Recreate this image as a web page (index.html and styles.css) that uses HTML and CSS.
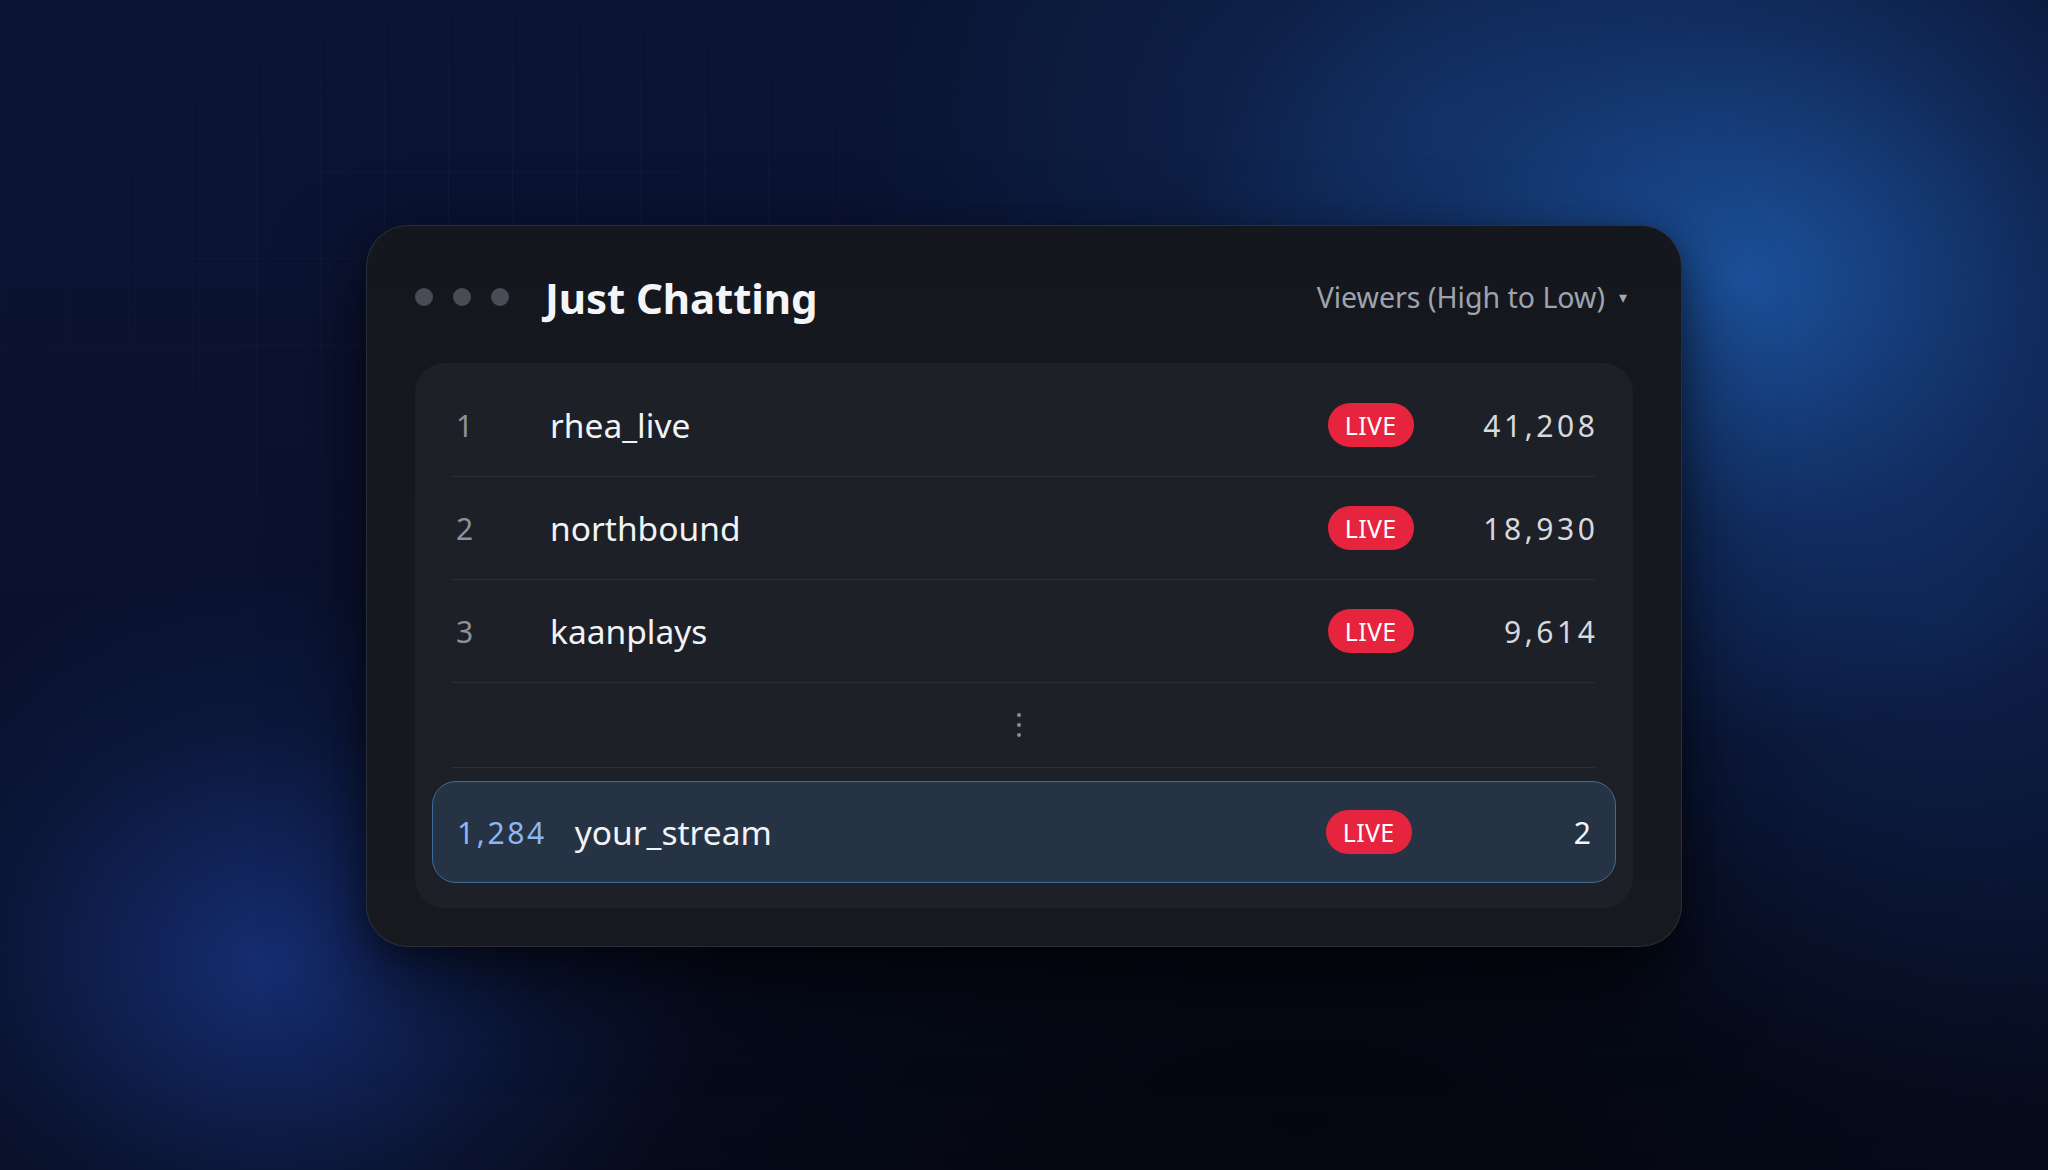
FILE: index.html
```html
<!DOCTYPE html>
<html lang="en">
<head>
<meta charset="utf-8">
<title>Just Chatting</title>
<link rel="stylesheet" href="styles.css">
</head>
<body>
<div class="stage">
  <div class="grid"></div>
  <section class="card">
    <header class="card-head">
      <div class="dots"><span class="dot"></span><span class="dot"></span><span class="dot"></span></div>
      <h1 class="title">Just Chatting</h1>
      <div class="sort">Viewers (High to Low) <span class="caret">&#9662;</span></div>
    </header>
    <div class="panel">
      <div class="row">
        <span class="rank">1</span>
        <span class="name">rhea_live</span>
        <span class="live">LIVE</span>
        <span class="count">41,208</span>
      </div>
      <div class="row">
        <span class="rank">2</span>
        <span class="name">northbound</span>
        <span class="live">LIVE</span>
        <span class="count">18,930</span>
      </div>
      <div class="row">
        <span class="rank">3</span>
        <span class="name">kaanplays</span>
        <span class="live">LIVE</span>
        <span class="count">9,614</span>
      </div>
      <div class="gap-row"><span class="vdots"><i></i><i></i><i></i></span></div>
      <div class="row row-you">
        <span class="rank rank-you">1,284</span>
        <span class="name">your_stream</span>
        <span class="live">LIVE</span>
        <span class="count count-you">2</span>
      </div>
    </div>
  </section>
</div>
</body>
</html>
```

FILE: styles.css
```css
* { box-sizing: border-box; }
html, body { margin: 0; padding: 0; }
body {
  width: 2048px;
  height: 1170px;
  overflow: hidden;
  font-family: "Noto Sans", "Open Sans", sans-serif;
  background: #080d20;
}
.stage {
  position: relative;
  width: 2048px;
  height: 1170px;
  display: flex;
  align-items: center;
  justify-content: center;
  background:
    radial-gradient(ellipse 560px 460px at 1740px 280px, rgba(30, 90, 170, 0.85), rgba(24, 70, 140, 0.4) 55%, rgba(0, 0, 0, 0) 100%),
    radial-gradient(ellipse 600px 400px at 1450px 120px, rgba(22, 60, 120, 0.5), rgba(0, 0, 0, 0) 100%),
    radial-gradient(ellipse 500px 500px at 1950px 620px, rgba(18, 50, 110, 0.45), rgba(0, 0, 0, 0) 100%),
    radial-gradient(ellipse 460px 400px at 270px 965px, rgba(26, 56, 140, 0.75), rgba(18, 40, 100, 0.3) 60%, rgba(0, 0, 0, 0) 100%),
    radial-gradient(ellipse 900px 420px at 1300px 1120px, rgba(4, 6, 14, 0.9), rgba(0, 0, 0, 0) 100%),
    linear-gradient(180deg, #0a1432 0%, #0a1230 45%, #070b1c 100%);
}
.grid {
  position: absolute;
  inset: 0;
  background-image:
    linear-gradient(rgba(255, 255, 255, 0.03) 1px, transparent 1px),
    linear-gradient(90deg, rgba(255, 255, 255, 0.03) 1px, transparent 1px);
  background-size: 64px 86px;
  -webkit-mask-image: radial-gradient(ellipse 700px 420px at 500px 250px, #000 0%, transparent 100%);
  mask-image: radial-gradient(ellipse 700px 420px at 500px 250px, #000 0%, transparent 100%);
}
.card {
  position: relative;
  width: 1316px;
  height: 722px;
  margin-top: 2px;
  padding: 38px 48px 38px 48px;
  background: linear-gradient(180deg, #15171e 0%, #17191f 100%);
  border: 1px solid rgba(150, 165, 190, 0.16);
  border-radius: 42px;
  box-shadow: 0 40px 90px rgba(0, 0, 0, 0.55), 0 10px 30px rgba(0, 0, 0, 0.35);
  display: flex;
  flex-direction: column;
}
.card-head {
  height: 70px;
  margin-bottom: 33px;
  display: flex;
  align-items: center;
}
.dots {
  display: flex;
  gap: 20px;
  margin-right: 36px;
}
.dot {
  width: 18px;
  height: 18px;
  border-radius: 50%;
  background: #4a4c55;
}
.title {
  margin: 0;
  flex: 1;
  font-size: 42px;
  font-weight: 700;
  color: #f3f5f8;
  letter-spacing: -0.1px;
}
.sort {
  font-size: 28.5px;
  color: #9ea3ad;
  margin-right: 6px;
  display: flex;
  align-items: center;
}
.caret {
  font-size: 16px;
  margin-left: 14px;
  color: #a4a9b2;
}
.panel {
  flex: 1;
  background: #1e2028;
  border-radius: 30px;
  padding: 11px 38px 25px 37px;
  display: flex;
  flex-direction: column;
}
.row {
  height: 103px;
  padding-left: 4px;
  display: flex;
  align-items: center;
  border-bottom: 1px solid #2b2e37;
}
.rank {
  min-width: 66px;
  margin-right: 28px;
  font-size: 30px;
  color: #8c919a;
  letter-spacing: 2.6px;
}
.name {
  flex: 1;
  font-size: 33.5px;
  color: #f1f3f6;
}
.live {
  width: 86px;
  height: 44px;
  border-radius: 22px;
  background: #e6243d;
  color: #fff;
  font-size: 25px;
  display: flex;
  align-items: center;
  justify-content: center;
  letter-spacing: 0.3px;
}
.count {
  width: 185px;
  text-align: right;
  font-size: 30px;
  color: #d6d9de;
  letter-spacing: 3.6px;
  margin-right: -3.6px;
}
.gap-row {
  height: 85px;
  display: flex;
  align-items: center;
  justify-content: center;
  border-bottom: 1px solid #2b2e37;
}
.vdots {
  display: flex;
  flex-direction: column;
  gap: 6px;
  margin-right: 10px;
}
.vdots i {
  width: 4px;
  height: 4px;
  border-radius: 50%;
  background: #8a8e96;
}
.row-you {
  height: 102px;
  margin: 13px -21px 0 -20px;
  padding: 0 24px 0 24px;
  background: #253345;
  border: 1.5px solid #3e6a98;
  border-radius: 24px;
}
.rank-you {
  color: #8db6ee;
}
.count-you {
  color: #f4f6f9;
  width: 183px;
}
```
